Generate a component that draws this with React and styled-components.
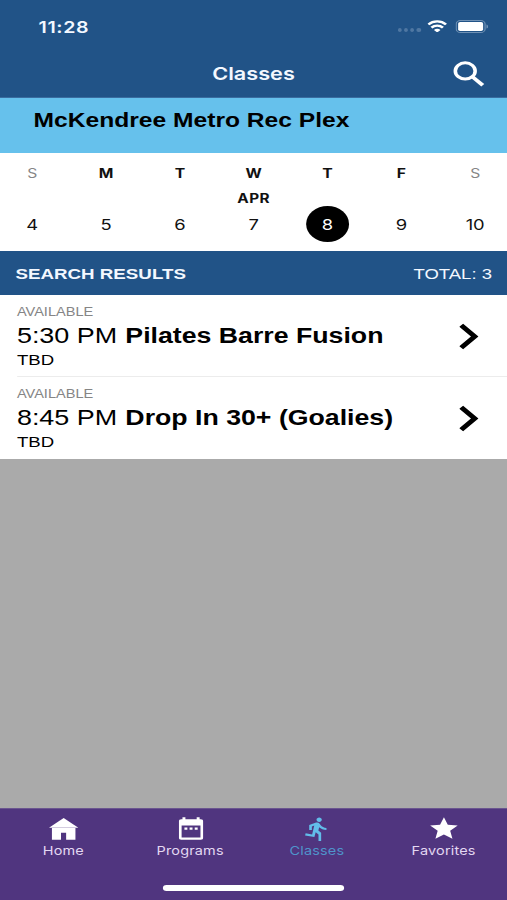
import React from "react";
import styled, { createGlobalStyle } from "styled-components";
import { MdDirectionsRun, MdStar } from "react-icons/md";

const days = [
    { letter: "S", date: 4, weekend: true },
    { letter: "M", date: 5 },
    { letter: "T", date: 6 },
    { letter: "W", date: 7, month: "APR" },
    { letter: "T", date: 8, selected: true },
    { letter: "F", date: 9 },
    { letter: "S", date: 10, weekend: true },
];

const classes = [
    { status: "AVAILABLE", time: "5:30 PM", name: "Pilates Barre Fusion", room: "TBD" },
    { status: "AVAILABLE", time: "8:45 PM", name: "Drop In 30+ (Goalies)", room: "TBD" },
];

const SearchIcon = () => (
    <svg width="26" height="26" viewBox="0 0 26 26" fill="none" stroke="currentColor">
        <circle cx="9.9" cy="9.9" r="8.1" strokeWidth="2.9" />
        <path d="M15.6 15.6 L24.2 24.2" strokeWidth="3.4" />
    </svg>
);

const HomeIcon = () => (
    <svg width="24" height="22" viewBox="0 0 24 22" fill="currentColor">
        <path d="M12 0 L24 9.7 H0 Z" />
        <path d="M2.4 10.1 H21.6 V21.8 H14 V14.8 H9.8 V21.8 H2.4 Z" />
    </svg>
);

const CalendarIcon = () => (
    <svg width="20" height="23" viewBox="0 0 20 23">
        <path d="M3 0.3 H5.4 V4 H3 Z M14.6 0.3 H17 V4 H14.6 Z" fill="currentColor" />
        <path
            fill="currentColor"
            fillRule="evenodd"
            d="M2 2.2 H18 Q20 2.2 20 4.2 V20.8 Q20 22.8 18 22.8 H2 Q0 22.8 0 20.8 V4.2 Q0 2.2 2 2.2 Z M2.3 8.6 V20.4 H17.7 V8.6 Z"
        />
        <path d="M4.6 10.5 H7 V12.8 H4.6 Z M8.8 10.5 H11.2 V12.8 H8.8 Z M13 10.5 H15.4 V12.8 H13 Z" fill="currentColor" />
    </svg>
);

const tabs = [
    { label: "Home", icon: <HomeIcon /> },
    { label: "Programs", icon: <CalendarIcon /> },
    { label: "Classes", icon: <MdDirectionsRun size={26} />, active: true },
    { label: "Favorites", icon: <MdStar size={27} /> },
];

const Wifi = () => (
    <svg width="16" height="12.5" viewBox="0 0 16 12.5" fill="none" stroke="#fff" strokeWidth="2.3">
        <path d="M0.8 4.5 C4.8 0.4 11.2 0.4 15.2 4.5" />
        <path d="M3.3 7.6 C6 5 10 5 12.7 7.6" />
        <path d="M8 12.5 L5.3 9.9 C6.9 8.4 9.1 8.4 10.7 9.9 Z" fill="#fff" stroke="none" />
    </svg>
);

const Battery = () => (
    <svg width="27" height="13" viewBox="0 0 27 13">
        <rect x="0.5" y="0.5" width="23.6" height="12" rx="3.6" fill="none" stroke="#6f91b5" />
        <rect x="2.1" y="2.1" width="20.4" height="8.8" rx="1.6" fill="#fff" />
        <path d="M25.2 4.4 C27 5 27 8 25.2 8.6 Z" fill="#6f91b5" />
    </svg>
);

const Chevron = () => (
    <svg width="16" height="27" viewBox="0 0 16 27" fill="none" stroke="#000" strokeWidth="4.4">
        <path d="M1.6 2.2 L12.6 13.5 L1.6 24.8" />
    </svg>
);

export default function App() {
    return (
        <Screen>
            <GlobalStyle />
            <StatusBar>
                <Clock>11:28</Clock>
                <Signal><i /><i /><i /><i /></Signal>
                <Wifi />
                <Battery />
            </StatusBar>
            <NavBar>
                <span />
                <Title>Classes</Title>
                <SearchButton aria-label="Search"><SearchIcon /></SearchButton>
            </NavBar>
            <Location>McKendree Metro Rec Plex</Location>
            <Week>
                {days.map(day => (
                    <Day key={day.date}>
                        <Letter $weekend={day.weekend}>{day.letter}</Letter>
                        <Month>{day.month}</Month>
                        <DayNumber $selected={day.selected}>{day.date}</DayNumber>
                    </Day>
                ))}
            </Week>
            <ResultsHeader>
                <strong>SEARCH RESULTS</strong>
                <span>TOTAL: 3</span>
            </ResultsHeader>
            <Results>
                {classes.map(item => (
                    <ClassRow key={item.time}>
                        <div>
                            <Status>{item.status}</Status>
                            <ClassName>{item.time} <strong>{item.name}</strong></ClassName>
                            <Room>{item.room}</Room>
                        </div>
                        <Chevron />
                    </ClassRow>
                ))}
            </Results>
            <TabBar>
                <Tabs>
                    {tabs.map(tab => (
                        <Tab key={tab.label} $active={tab.active}>
                            <TabIcon>{tab.icon}</TabIcon>
                            <TabLabel $active={tab.active}>{tab.label}</TabLabel>
                        </Tab>
                    ))}
                </Tabs>
                <HomeIndicator />
            </TabBar>
        </Screen>
    );
}

const GlobalStyle = createGlobalStyle`
html, body {
    margin: 0;
    width: 507px;
    height: 900px;
    overflow: hidden;
    background: #aaa;
}
*, *::before {
    box-sizing: border-box;
}
svg {
    display: block;
    flex: none;
}
`;

/* 414pt wide phone layout, widened to fill the window */
const Screen = styled.div`
    display: flex;
    flex-direction: column;
    width: 414px;
    height: 900px;
    overflow: hidden;
    transform: scaleX(1.22464);
    transform-origin: 0 0;
    background: #aaa;
    color: #000;
    font-family: "Liberation Sans", Arial, sans-serif;
    white-space: nowrap;
`;

const StatusBar = styled.div`
    display: flex;
    align-items: center;
    flex: none;
    height: 52px;
    padding: 0 15.5px 0 31.5px;
    background: #215387;
`;

const Clock = styled.span`
    flex: 1;
    padding-top: 1px;
    color: #f3f8ff;
    font: 600 16px/20px Inter, sans-serif;
    letter-spacing: 0.5px;
`;

const Signal = styled.span`
    display: flex;
    gap: 1.8px;
    margin: 8px 5.5px 0 0;
    i {
        width: 3.4px;
        height: 4px;
        border-radius: 50%;
        background: #4f77a2;
    }
    & + svg {
        margin-right: 6.5px;
    }
`;

const NavBar = styled.header`
    display: grid;
    grid-template-columns: 1fr auto 1fr;
    align-items: center;
    flex: none;
    height: 46px;
    padding: 0 17.6px 1px;
    background: #215387;
    border-bottom: 1px solid #3a6c9f;
    color: #fff;
`;

const Title = styled.h1`
    margin: 0;
    color: #f3f8ff;
    font: 600 17.7px/22px Inter, sans-serif;
`;

const SearchButton = styled.button`
    justify-self: end;
    padding: 0;
    border: 0;
    background: none;
    color: #fff;
`;

const Location = styled.div`
    flex: none;
    height: 55px;
    padding: 10px 27.4px;
    background: #66c1ec;
    font-size: 20.1px;
    line-height: 24px;
    font-weight: 700;
`;

const Week = styled.div`
    display: flex;
    flex: none;
    height: 98px;
    margin: 0 -4.2px 0 -3.8px;
    background: #fff;
    font-family: Inter, sans-serif;
`;

const Day = styled.div`
    display: flex;
    flex: 1;
    flex-direction: column;
    align-items: center;
    padding-top: 12px;
`;

const Letter = styled.span`
    height: 25px;
    color: ${props => (props.$weekend ? "#858585" : "#111")};
    font-size: 12.8px;
    line-height: 18px;
    font-weight: ${props => (props.$weekend ? 400 : 700)};
`;

const Month = styled.span`
    height: 16px;
    color: #111;
    font-size: 12.5px;
    line-height: 17px;
    font-weight: 700;
    letter-spacing: 0.4px;
`;

const DayNumber = styled.span`
    width: 35.4px;
    height: 36px;
    border-radius: 50%;
    background: ${props => (props.$selected ? "#000" : "none")};
    color: ${props => (props.$selected ? "#fff" : "#111")};
    font-size: 15px;
    line-height: 37px;
    text-align: center;
`;

const ResultsHeader = styled.div`
    display: flex;
    justify-content: space-between;
    flex: none;
    height: 44px;
    padding: 0 12.3px 0 12.7px;
    background: #215387;
    color: #f3f8ff;
    font-size: 15.3px;
    line-height: 45px;
    span {
        font-size: 15.1px;
    }
`;

const Results = styled.div`
    flex: 1;
`;

const ClassRow = styled.div`
    display: flex;
    align-items: center;
    justify-content: space-between;
    height: 82px;
    padding: 0 23.2px 2px 13.8px;
    background: linear-gradient(#ececec, #ececec) 14px 100% / 100% 1px no-repeat #fff;
    &:last-child {
        background: #fff;
    }
    svg {
        margin-top: 2px;
    }
`;

const Status = styled.div`
    color: #858585;
    font-size: 11.9px;
    line-height: 16px;
`;

const ClassName = styled.div`
    font-size: 22px;
    line-height: 32px;
    strong {
        margin-left: 0.5px;
        font-size: 21.8px;
    }
`;

const Room = styled.div`
    font-size: 15.2px;
    line-height: 15px;
`;

const TabBar = styled.nav`
    display: flex;
    flex: none;
    flex-direction: column;
    align-items: center;
    height: 92px;
    background: #50357f;
    border-top: 1px solid #6a558f;
`;

const Tabs = styled.div`
    display: flex;
    width: 100%;
    height: 76px;
`;

const Tab = styled.div`
    display: flex;
    flex: 1;
    flex-direction: column;
    align-items: center;
    padding-top: 6px;
    color: ${props => (props.$active ? "#62bdea" : "#fff")};
`;

const TabIcon = styled.span`
    display: flex;
    align-items: center;
    height: 27px;
    padding-left: 0.6px;
`;

const TabLabel = styled.span`
    color: ${props => (props.$active ? "#4f94cb" : "#e3d8f2")};
    font: 400 11.8px/18px Inter, sans-serif;
    letter-spacing: 0.15px;
`;

const HomeIndicator = styled.div`
    width: 148px;
    height: 6px;
    border-radius: 3px;
    background: #fff;
`;
